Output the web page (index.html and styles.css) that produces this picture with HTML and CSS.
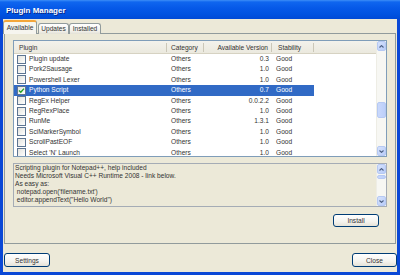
FILE: index.html
```html
<!DOCTYPE html>
<html lang="en">
<head>
    <meta charset="UTF-8">
    <title>Plugin Manager</title>
    <link rel="stylesheet" href="styles.css">
</head>
<body>
    <div class="window">
        <div class="titlebar">Plugin Manager</div>
        <div class="frame">
            <div class="tabs">
                <div class="tab tab-available active">Available</div>
                <div class="tab tab-updates">Updates</div>
                <div class="tab tab-installed">Installed</div>
            </div>

            <div class="panel">
                <div class="list">
                    <div class="list-body">
                        <div class="header">
                            <div class="col col-name"><span class="hcell">Plugin</span></div>
                            <div class="col col-cat"><span class="hcell">Category</span></div>
                            <div class="col col-ver"><span class="hcell">Available Version</span></div>
                            <div class="col col-stab"><span class="hcell">Stability</span></div>
                        </div>
                        <div class="row">
                            <div class="col col-name"><span class="check"></span>Plugin update</div>
                            <div class="col col-cat">Others</div>
                            <div class="col col-ver">0.3</div>
                            <div class="col col-stab">Good</div>
                        </div>
                        <div class="row">
                            <div class="col col-name"><span class="check"></span>Pork2Sausage</div>
                            <div class="col col-cat">Others</div>
                            <div class="col col-ver">1.0</div>
                            <div class="col col-stab">Good</div>
                        </div>
                        <div class="row">
                            <div class="col col-name"><span class="check"></span>Powershell Lexer</div>
                            <div class="col col-cat">Others</div>
                            <div class="col col-ver">1.0</div>
                            <div class="col col-stab">Good</div>
                        </div>
                        <div class="row selected">
                            <div class="col col-name"><span class="check checked"><svg width="7" height="7" viewBox="0 0 7 7"><polyline points="1,3.5 2.8,5.3 6,1.6" fill="none" stroke="#21a121" stroke-width="1.4"/></svg></span>Python Script</div>
                            <div class="col col-cat">Others</div>
                            <div class="col col-ver">0.7</div>
                            <div class="col col-stab">Good</div>
                        </div>
                        <div class="row">
                            <div class="col col-name"><span class="check"></span>RegEx Helper</div>
                            <div class="col col-cat">Others</div>
                            <div class="col col-ver">0.0.2.2</div>
                            <div class="col col-stab">Good</div>
                        </div>
                        <div class="row">
                            <div class="col col-name"><span class="check"></span>RegRexPlace</div>
                            <div class="col col-cat">Others</div>
                            <div class="col col-ver">1.0</div>
                            <div class="col col-stab">Good</div>
                        </div>
                        <div class="row">
                            <div class="col col-name"><span class="check"></span>RunMe</div>
                            <div class="col col-cat">Others</div>
                            <div class="col col-ver">1.3.1</div>
                            <div class="col col-stab">Good</div>
                        </div>
                        <div class="row">
                            <div class="col col-name"><span class="check"></span>SciMarkerSymbol</div>
                            <div class="col col-cat">Others</div>
                            <div class="col col-ver">1.0</div>
                            <div class="col col-stab">Good</div>
                        </div>
                        <div class="row">
                            <div class="col col-name"><span class="check"></span>ScrollPastEOF</div>
                            <div class="col col-cat">Others</div>
                            <div class="col col-ver">1.0</div>
                            <div class="col col-stab">Good</div>
                        </div>
                        <div class="row">
                            <div class="col col-name"><span class="check"></span>Select 'N' Launch</div>
                            <div class="col col-cat">Others</div>
                            <div class="col col-ver">1.0</div>
                            <div class="col col-stab">Good</div>
                        </div>
                    </div>
                    <div class="vscroll">
                        <div class="sbtn"><svg width="5" height="3" viewBox="0 0 5 3"><polyline points="0.5,2.5 2.5,0.6 4.5,2.5" fill="none" stroke="#4d6185" stroke-width="1.1"/></svg></div>
                        <div class="thumb list-thumb"></div>
                        <div class="sbtn down"><svg width="5" height="3" viewBox="0 0 5 3"><polyline points="0.5,0.5 2.5,2.4 4.5,0.5" fill="none" stroke="#4d6185" stroke-width="1.1"/></svg></div>
                    </div>
                </div>

                <div class="desc">
                    <div class="desc-text">Scripting plugin for Notepad++, help included
Needs Microsoft Visual C++ Runtime 2008 - link below.
As easy as:
 notepad.open('filename.txt')
 editor.appendText("Hello World")</div>
                    <div class="vscroll">
                        <div class="sbtn"><svg width="5" height="3" viewBox="0 0 5 3"><polyline points="0.5,2.5 2.5,0.6 4.5,2.5" fill="none" stroke="#4d6185" stroke-width="1.1"/></svg></div>
                        <div class="thumb desc-thumb"></div>
                        <div class="sbtn down"><svg width="5" height="3" viewBox="0 0 5 3"><polyline points="0.5,0.5 2.5,2.4 4.5,0.5" fill="none" stroke="#4d6185" stroke-width="1.1"/></svg></div>
                    </div>
                </div>

                <div class="actions">
                    <button class="btn btn-install">Install</button>
                </div>
            </div>

            <div class="footer">
                <button class="btn btn-settings">Settings</button>
                <button class="btn btn-close">Close</button>
            </div>
        </div>
    </div>
</body>
</html>
```

FILE: styles.css
```css
body {
    margin: 0;
    font-family: 'Liberation Sans', Arial, sans-serif;
    font-size: 6.6px;
    color: #333;
    background-color: #ece9d8;
}
.window {
    width: 400px;
    height: 275px;
    display: flex;
    flex-direction: column;
    background-color: #0a48d6;
}
.titlebar {
    flex: none;
    height: 19px;
    box-sizing: border-box;
    padding-left: 6px;
    line-height: 21px;
    color: white;
    font-weight: bold;
    font-size: 8px;
    text-shadow: 1px 1px #0a2a8a;
    background: linear-gradient(#3d8ef7 0, #0f66ef 2px, #0659e8 8px, #0053e1 14px, #004ad6 19px);
}
.frame {
    flex: 1;
    display: flex;
    flex-direction: column;
    border: solid #0a48d6;
    border-width: 0 3px 3px;
    background-color: #ece9d8;
}

/* tabs */
.tabs {
    display: flex;
    align-items: flex-end;
    height: 14px;
    margin-top: 1px;
    margin-bottom: -1px;
    position: relative;
    z-index: 1;
}
.tab {
    box-sizing: border-box;
    height: 11px;
    line-height: 10px;
    text-align: center;
    border: 1px solid #919b9c;
    border-bottom: none;
    border-radius: 3px 3px 0 0;
    background: linear-gradient(#ffffff, #f1f0ea 70%, #e3e1d6);
}
.tab.active {
    height: 14px;
    line-height: 12px;
    border-top: 2px solid #f4a63a;
    background: #f6f5ef;
}
.tab-available { width: 34px; }
.tab-updates { width: 31px; margin-left: 1px; }
.tab-installed { width: 32px; }

.panel {
    box-sizing: border-box;
    width: 392px;
    height: 211px;
    margin-left: 1px;
    padding: 6px 0 0 8px;
    border: 1px solid #919b9c;
    display: flex;
    flex-direction: column;
}

/* plugin list */
.list {
    box-sizing: border-box;
    width: 374px;
    height: 117px;
    border: 1px solid #7f9db9;
    background-color: white;
    display: flex;
}
.list-body {
    flex: 1;
    overflow: hidden;
}
.header {
    display: flex;
    align-items: center;
    height: 13px;
    box-sizing: border-box;
    border-bottom: 1px solid #d6d2c2;
    background: linear-gradient(#f3f2ec, #ebe9de);
}
.row {
    display: flex;
    height: 10.4px;
    line-height: 10.4px;
    width: 300px;
}
.row.selected {
    background-color: #316ac5;
    color: white;
}
.col {
    box-sizing: border-box;
    white-space: nowrap;
    overflow: hidden;
}
.col-name { width: 153px; display: flex; align-items: center; }
.col-cat { width: 37px; padding-left: 4px; }
.col-ver { width: 68px; text-align: right; padding-right: 3px; }
.col-stab { width: 42px; padding-left: 4px; }
.header .col {
    height: 9px;
    line-height: 9px;
    border-right: 1px solid #cbc7b8;
}
.header .col-name { padding-left: 5px; }
.header .col-stab { padding-left: 6px; }
.check {
    box-sizing: border-box;
    width: 9px;
    height: 9px;
    margin: 0 3px 0 3px;
    border: 1px solid #5d7592;
    background: linear-gradient(135deg, #e2e2dc, #ffffff);
    display: flex;
    align-items: center;
    justify-content: center;
}

/* scrollbars */
.vscroll {
    width: 9px;
    display: flex;
    flex-direction: column;
    background-color: #f7f7f3;
    border-left: 1px solid #eeede5;
}
.sbtn {
    box-sizing: border-box;
    height: 10px;
    border: 1px solid #b6c9f3;
    border-radius: 2px;
    background: linear-gradient(135deg, #d6e2fd, #b8ccf8);
    display: flex;
    align-items: center;
    justify-content: center;
}
.sbtn.down {
    margin-top: auto;
}
.thumb {
    box-sizing: border-box;
    border: 1px solid #b6c9f3;
    border-radius: 2px;
    background: linear-gradient(90deg, #c9d8fc, #bccff9);
}
.list-thumb {
    height: 16px;
    margin-top: 51px;
}
.desc-thumb {
    height: 4px;
    margin-top: 1px;
}

/* description */
.desc {
    box-sizing: border-box;
    width: 374px;
    height: 44px;
    margin-top: 6px;
    border: 1px solid #a5acb5;
    display: flex;
}
.desc-text {
    flex: 1;
    padding-left: 1px;
    line-height: 8px;
    white-space: pre;
    overflow: hidden;
}

/* buttons */
.actions {
    width: 366px;
    margin-top: 7px;
    display: flex;
    justify-content: flex-end;
}
.btn {
    box-sizing: border-box;
    height: 13px;
    padding: 0;
    font-family: inherit;
    font-size: 6.6px;
    color: #333;
    border: 1px solid #003c74;
    border-radius: 3px;
    background: linear-gradient(#ffffff, #f4f3ee 60%, #e6e3d8);
}
.btn-install { width: 46px; }
.footer {
    display: flex;
    justify-content: space-between;
    padding: 9px 0 0 1px;
}
.btn-settings { width: 46px; height: 14px; }
.btn-close { width: 45px; height: 14px; }
```
